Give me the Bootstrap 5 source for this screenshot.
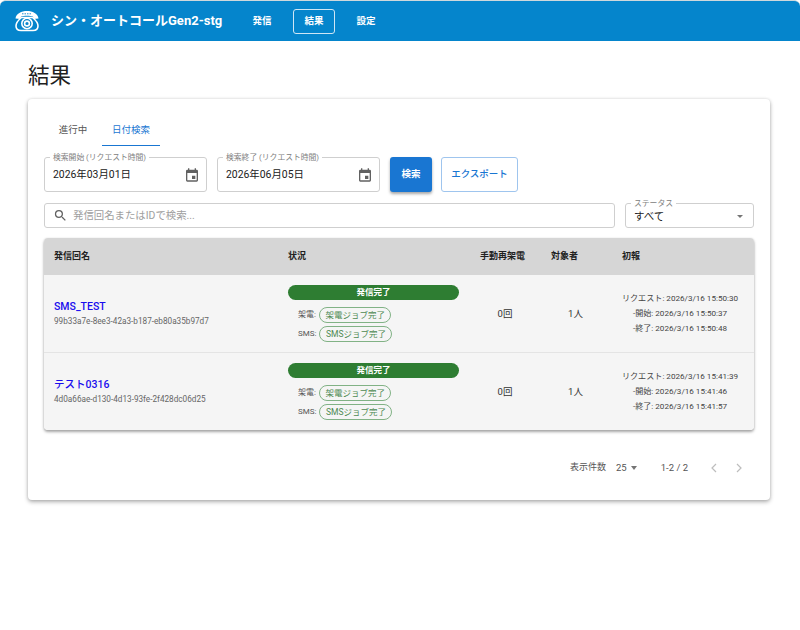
<!DOCTYPE html>
<html lang="ja">
<head>
  <meta charset="UTF-8" />
  <meta name="viewport" content="width=device-width, initial-scale=1.0"/>
  <title>結果 - シン・オートコールGen2-stg</title>
  <link href="https://cdn.jsdelivr.net/npm/bootstrap@5.3.0/dist/css/bootstrap.min.css" rel="stylesheet"/>
  <style>
    html, body { height: 100%; }
    body { background: #fff; overflow: hidden; font-family: Roboto, "Noto Sans CJK JP", sans-serif; color: #212121; }
    .app-bar { height: 41px; background: #0585cc; border-top: 1px solid #cfd8dc; border-radius: 6px 6px 0 0; padding: 0 0 0 14px; color: #fff; }
    .brand-name { font-size: 13px; font-weight: 700; margin: 0 0 0 11px; width: 190px; white-space: nowrap; }
    .menu-item { color: #fff; font-size: 9.5px; font-weight: 700; width: 42px; height: 25px; margin-right: 10px; display: flex; align-items: center; justify-content: center; border: 1px solid transparent; border-radius: 3px; text-decoration: none; }
    .menu-item.on { border-color: #cfe6f5; }
    .page-wrap { padding: 21px 30px 0 28px; }
    .page-title { font-size: 21.5px; font-weight: 400; line-height: 28px; margin: 0 0 9px 0; }
    .result-panel { height: 401px; border-radius: 4px; box-shadow: 0 2px 4px rgba(0,0,0,.3), 0 0 3px rgba(0,0,0,.12); padding: 16px 16px 0; }
    .tab-row { height: 31px; font-size: 9.5px; }
    .tab-cell { width: 58px; display: flex; align-items: center; justify-content: center; color: #555; }
    .tab-cell.on { color: #1976d2; border-bottom: 1px solid #1976d2; }
    .filter-row { margin-top: 11px; height: 35px; }
    .out-field { position: relative; border: 1px solid #cfcfcf; border-radius: 3px; background: #fff; display: flex; align-items: center; }
    .out-field > label { position: absolute; top: -6px; left: 5px; background: #fff; padding: 0 3px; font-size: 7.8px; line-height: 11px; color: #808080; white-space: nowrap; }
    .date-field { width: 163px; height: 35px; padding: 1px 6px 0 8px; font-size: 10.4px; justify-content: space-between; }
    .date-field + .date-field { margin-left: 10px; }
    .find-btn { width: 42px; height: 35px; margin-left: 10px; padding: 0; border: 0; border-radius: 3px; background: #1976d2; color: #fff; font-size: 9.5px; font-weight: 700; box-shadow: 0 2px 3px rgba(0,0,0,.35); }
    .export-btn { width: 77px; height: 35px; margin-left: 9px; padding: 0; border: 1px solid #9fc5ee; border-radius: 3px; background: #fff; color: #1976d2; font-size: 9.5px; font-weight: 500; }
    .search-row { margin-top: 11px; height: 25px; }
    .search-field { width: 571px; height: 25px; padding-left: 8px; font-size: 10.4px; color: #9e9e9e; }
    .search-field span { margin-left: 5px; }
    .status-field { width: 129px; height: 25px; margin-left: 10px; padding: 2px 10px 0 8px; font-size: 10.5px; justify-content: space-between; }
    .tri { width: 0; height: 0; border-left: 4px solid transparent; border-right: 4px solid transparent; border-top: 4px solid #757575; }
    .status-field .tri { border-left-width: 3.5px; border-right-width: 3.5px; border-top-width: 3.5px; }
    .result-grid { width: 710px; margin-top: 10px; border-radius: 4px; box-shadow: 0 2px 3px rgba(0,0,0,.35), 0 0 2px rgba(0,0,0,.1); overflow: hidden; }
    .grid-head { height: 37px; background: #d6d6d6; font-size: 9px; font-weight: 700; }
    .grid-line { height: 78px; background: #f5f5f5; border-top: 1px solid #e4e4e4; }
    .grid-head:first-child + .grid-line { border-top: 0; height: 77px; }
    .c-name { width: 234px; padding-left: 10px; }
    .c-state { width: 192px; padding: 0 11px 0 10px; }
    .c-redial { width: 70px; }
    .c-count { width: 71px; }
    .c-first { width: 143px; }
    .grid-head .c-redial { padding-left: 10px; white-space: nowrap; }
    .grid-head .c-count, .grid-head .c-first { padding-left: 11px; white-space: nowrap; }
    .call-name { color: #1a0dee; font-size: 10.5px; font-weight: 500; line-height: 14px; }
    .call-id { color: #666; font-size: 8.2px; line-height: 11px; margin: 2px 0 1px; }
    .done-pill { height: 15px; border-radius: 8px; background: #2e7d32; color: #fff; font-size: 8.5px; font-weight: 700; text-align: center; line-height: 15px; }
    .job-line { font-size: 8px; color: #555; height: 16px; margin-top: 3px; padding-left: 10px; }
    .done-pill + .job-line { margin-top: 7px; }
    .job-pill { margin-left: 3px; height: 16px; padding: 0 5.5px; border: 1px solid #81b285; border-radius: 8px; color: #4e8a52; font-size: 8.5px; line-height: 14px; white-space: nowrap; }
    .c-redial.val, .c-count.val { text-align: center; font-size: 9.5px; color: #333; padding-top: 1px; }
    .c-first.val { text-align: center; padding-right: 5px; font-size: 8.1px; line-height: 15.3px; color: #444; white-space: nowrap; }
    .pager-row { margin-top: 28px; font-size: 9px; color: #555; height: 20px; }
    .pager-size { margin-left: 10px; display: flex; align-items: center; gap: 4px; font-size: 9.5px; }
    .pager-size .tri { border-left-width: 3.5px; border-right-width: 3.5px; }
    .pager-count { margin-left: 24px; font-size: 9.5px; }
    .pager-arrows { margin-left: 22px; margin-right: 11px; gap: 17px; }
  </style>
</head>
<body>
  <header class="app-bar d-flex align-items-center">
    <svg width="26" height="22" viewBox="0 0 26 22" fill="none" stroke="#fff" stroke-width="1.6">
      <path d="M1.500 8.500 C2 3.500 7.500 1 13 1 S24 3.500 24.500 8.500 L19.500 9 L19 6.500 C16 5.500 10 5.500 7 6.500 L6.500 9 Z" fill="#fff" stroke="none"/>
      <path d="M7.500 7.500 C5 9.500 2 13 2 16 C2 19 4 20.500 7 20.500 H19 C22 20.500 24 19 24 16 C24 13 21 9.500 18.500 7.500 Z" fill="#0585cc"/>
      <circle cx="13" cy="13.500" r="5.200"/>
      <circle cx="13" cy="13.500" r="2.400"/>
      <path d="M8 3.800 h10" stroke="#0585cc" stroke-width=".9" stroke-dasharray="1.500 1"/>
    </svg>
    <h1 class="brand-name">シン・オートコールGen2-stg</h1>
    <nav class="d-flex align-items-center">
      <a class="menu-item" href="#">発信</a>
      <a class="menu-item on" href="#">結果</a>
      <a class="menu-item" href="#">設定</a>
    </nav>
  </header>

  <main class="page-wrap">
    <h2 class="page-title">結果</h2>
    <section class="result-panel bg-white">
      <div class="tab-row d-flex">
        <div class="tab-cell">進行中</div>
        <div class="tab-cell on">日付検索</div>
      </div>

      <div class="filter-row d-flex">
        <div class="out-field date-field">
          <label>検索開始 (リクエスト時間)</label>
          <span>2026年03月01日</span>
          <svg width="16" height="16" viewBox="0 0 24 24" fill="#616161"><path d="M19 4h-1V2h-2v2H8V2H6v2H5a2 2 0 0 0-2 2v14a2 2 0 0 0 2 2h14a2 2 0 0 0 2-2V6a2 2 0 0 0-2-2zm0 16H5V9h14v11zm-7-7h5v5h-5z"/></svg>
        </div>
        <div class="out-field date-field">
          <label>検索終了 (リクエスト時間)</label>
          <span>2026年06月05日</span>
          <svg width="16" height="16" viewBox="0 0 24 24" fill="#616161"><path d="M19 4h-1V2h-2v2H8V2H6v2H5a2 2 0 0 0-2 2v14a2 2 0 0 0 2 2h14a2 2 0 0 0 2-2V6a2 2 0 0 0-2-2zm0 16H5V9h14v11zm-7-7h5v5h-5z"/></svg>
        </div>
        <button class="find-btn" type="button">検索</button>
        <button class="export-btn" type="button">エクスポート</button>
      </div>

      <div class="search-row d-flex">
        <div class="out-field search-field">
          <svg width="15" height="15" viewBox="0 0 24 24" fill="#616161"><path d="M15.500 14h-.79l-.28-.27A6.470 6.470 0 0 0 16 9.500 6.500 6.500 0 1 0 9.500 16c1.610 0 3.090-.59 4.230-1.570l.27.28v.79l5 4.990L20.490 19l-4.990-5zm-6 0C7.010 14 5 11.990 5 9.500S7.010 5 9.500 5 14 7.010 14 9.500 11.990 14 9.500 14z"/></svg>
          <span>発信回名またはIDで検索...</span>
        </div>
        <div class="out-field status-field">
          <label>ステータス</label>
          <span>すべて</span>
          <i class="tri"></i>
        </div>
      </div>

      <div class="result-grid" id="grid">
        <div class="grid-head d-flex align-items-center">
          <div class="c-name">発信回名</div>
          <div class="c-state">状況</div>
          <div class="c-redial">手動再架電</div>
          <div class="c-count">対象者</div>
          <div class="c-first">初報</div>
        </div>
      </div>

      <div class="pager-row d-flex align-items-center justify-content-end">
        <span>表示件数</span>
        <span class="pager-size">25 <i class="tri"></i></span>
        <span class="pager-count">1-2 / 2</span>
        <span class="pager-arrows d-flex">
          <svg width="8" height="10" viewBox="0 0 8 10" fill="none" stroke="#bdbdbd" stroke-width="1.200"><path d="M6 1 2 5l4 4"/></svg>
          <svg width="8" height="10" viewBox="0 0 8 10" fill="none" stroke="#bdbdbd" stroke-width="1.200"><path d="M2 1l4 4-4 4"/></svg>
        </span>
      </div>
    </section>
  </main>

  <script>
    const rows = [
      { name: "SMS_TEST", id: "99b33a7e-8ee3-42a3-b187-eb80a35b97d7", times: ["15:50:30", "15:50:37", "15:50:48"] },
      { name: "テスト0316", id: "4d0a66ae-d130-4d13-93fe-2f428dc06d25", times: ["15:41:39", "15:41:46", "15:41:57"] }
    ];

    const grid = document.getElementById("grid");
    rows.forEach(r => {
      const line = document.createElement("div");
      line.className = "grid-line d-flex align-items-center";
      line.innerHTML = `
        <div class="c-name">
          <div class="call-name">${r.name}</div>
          <div class="call-id">${r.id}</div>
        </div>
        <div class="c-state">
          <div class="done-pill">発信完了</div>
          <div class="job-line d-flex align-items-center">架電: <span class="job-pill">架電ジョブ完了</span></div>
          <div class="job-line d-flex align-items-center">SMS: <span class="job-pill">SMSジョブ完了</span></div>
        </div>
        <div class="c-redial val">0回</div>
        <div class="c-count val">1人</div>
        <div class="c-first val">
          <div>リクエスト: 2026/3/16 ${r.times[0]}</div>
          <div>-開始: 2026/3/16 ${r.times[1]}</div>
          <div>-終了: 2026/3/16 ${r.times[2]}</div>
        </div>`;
      grid.appendChild(line);
    });
  </script>
  <script src="https://cdn.jsdelivr.net/npm/bootstrap@5.3.0/dist/js/bootstrap.bundle.min.js"></script>
</body>
</html>
